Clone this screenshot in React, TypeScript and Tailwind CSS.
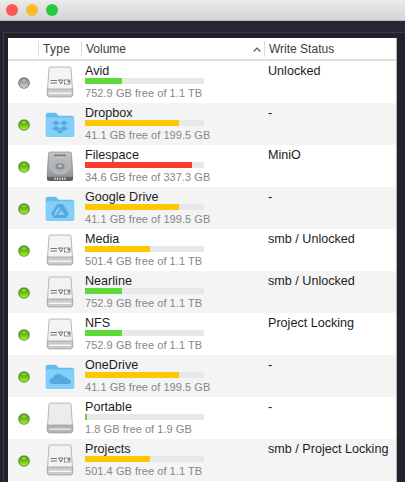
import React from "react";

type Kind = "drive" | "hd" | "portable" | "dropbox" | "gdrive" | "onedrive";

type Vol = {
  name: string;
  kind: Kind;
  pct: number;
  color: string;
  size: string;
  status: string;
  online?: boolean;
};

const volumes: Vol[] = [
  { name: "Avid", kind: "drive", pct: 31, color: "#5fd83a", size: "752.9 GB free of 1.1 TB", status: "Unlocked", online: false },
  { name: "Dropbox", kind: "dropbox", pct: 79, color: "#fdc800", size: "41.1 GB free of 199.5 GB", status: "-" },
  { name: "Filespace", kind: "hd", pct: 90, color: "#fb3a30", size: "34.6 GB free of 337.3 GB", status: "MiniO" },
  { name: "Google Drive", kind: "gdrive", pct: 79, color: "#fdc800", size: "41.1 GB free of 199.5 GB", status: "-" },
  { name: "Media", kind: "drive", pct: 55, color: "#fdc800", size: "501.4 GB free of 1.1 TB", status: "smb / Unlocked" },
  { name: "Nearline", kind: "drive", pct: 31, color: "#5fd83a", size: "752.9 GB free of 1.1 TB", status: "smb / Unlocked" },
  { name: "NFS", kind: "drive", pct: 31, color: "#5fd83a", size: "752.9 GB free of 1.1 TB", status: "Project Locking" },
  { name: "OneDrive", kind: "onedrive", pct: 79, color: "#fdc800", size: "41.1 GB free of 199.5 GB", status: "-" },
  { name: "Portable", kind: "portable", pct: 1.5, color: "#5fd83a", size: "1.8 GB free of 1.9 GB", status: "-" },
  { name: "Projects", kind: "drive", pct: 55, color: "#fdc800", size: "501.4 GB free of 1.1 TB", status: "smb / Project Locking" },
];

function StatusDot({ online = true }: { online?: boolean }) {
  const id = online ? "dot-on" : "dot-off";
  return (
    <svg width="12" height="12" viewBox="0 0 12 12">
      <defs>
        <linearGradient id={id} x1="0" y1="0" x2="0" y2="1">
          <stop offset="0%" stopColor={online ? "#4c9a08" : "#858585"} />
          <stop offset="55%" stopColor={online ? "#6fc80c" : "#a8a8a8"} />
          <stop offset="100%" stopColor={online ? "#aef032" : "#d6d6d6"} />
        </linearGradient>
      </defs>
      <circle cx="6" cy="6" r="5.8" fill={online ? "#5f8a3a" : "#747474"} />
      <circle cx="6" cy="6" r="4.8" fill={`url(#${id})`} />
      <ellipse cx="6" cy="3.2" rx="2.2" ry="1" fill="#fff" opacity="0.45" />
    </svg>
  );
}

function DriveIcon({ kind }: { kind: Kind }) {
  if (kind === "hd") {
    return (
      <svg width="28" height="31" viewBox="0 0 28 31">
        <defs>
          <linearGradient id="hd-body" x1="0" y1="0" x2="0" y2="1">
            <stop offset="0%" stopColor="#c4c8ca" />
            <stop offset="100%" stopColor="#94979a" />
          </linearGradient>
        </defs>
        <path d="M2.5 2.5 Q2.5 1 4 1 H24 Q25.5 1 25.5 2.5 L27 26 H1 Z" fill="url(#hd-body)" stroke="#77797b" strokeWidth="0.6" />
        <rect x="8" y="3.5" width="12" height="1.6" fill="#7d8082" />
        <ellipse cx="14" cy="15" rx="10" ry="8" fill="#b2b5b7" stroke="#d2d4d5" strokeWidth="0.5" />
        <ellipse cx="14" cy="15.5" rx="4.5" ry="3.2" fill="#8b8e90" />
        <ellipse cx="14" cy="15" rx="2" ry="1.3" fill="#c6c8c9" />
        <path d="M1 26 H27 V28 Q27 30 25 30 H3 Q1 30 1 28 Z" fill="#5f6164" />
        <path d="M9 26.5 V29 M11.5 26.5 V29 M14 26.5 V29 M16.5 26.5 V29 M19 26.5 V29" stroke="#e6e6e6" strokeWidth="1.1" />
      </svg>
    );
  }
  if (kind === "portable") {
    return (
      <svg width="28" height="32" viewBox="0 0 28 32">
        <path d="M3 2 Q3 1 4.5 1 H23.5 Q25 1 25 2 L26.5 24 H1.5 Z" fill="#ececec" stroke="#a9a9a9" strokeWidth="0.8" />
        <path d="M1.5 23 H26.5 L27 27 Q27 31 24.5 31 H3.5 Q1 31 1 27 Z" fill="#b4b4b4" stroke="#8f8f8f" strokeWidth="0.6" />
        <rect x="3" y="26.5" width="22" height="1.5" fill="#e6e6e6" />
      </svg>
    );
  }
  if (kind === "drive") {
    return (
      <svg width="28" height="32" viewBox="0 0 28 32">
        <path d="M3 2 Q3 1 4.5 1 H23.5 Q25 1 25 2 L26.5 24 H1.5 Z" fill="#f3f3f3" stroke="#a8a8a8" strokeWidth="0.8" />
        <path d="M1.5 23 H26.5 L27 27 Q27 31 24.5 31 H3.5 Q1 31 1 27 Z" fill="#cacaca" stroke="#8a8a8a" strokeWidth="0.6" />
        <rect x="3" y="26.5" width="22" height="1.5" fill="#f4f4f4" />
        <path d="M4.5 14.5 H11 M4.5 17 H11" stroke="#66686b" strokeWidth="0.9" />
        <path d="M12.5 14 L14.8 18 L17 14 Z" fill="none" stroke="#66686b" strokeWidth="0.9" />
        <rect x="18.5" y="14" width="5.5" height="4" fill="#fff" stroke="#66686b" strokeWidth="0.7" />
        <rect x="21.5" y="14.5" width="2.5" height="2" fill="#3c9a48" />
      </svg>
    );
  }
  return (
    <svg width="30" height="25" viewBox="0 0 30 25">
      <path d="M1 3 Q1 1 3 1 H10 Q11.5 1 12.5 2.5 L13.5 4 H27 Q29 4 29 6 V23 Q29 24.5 27.5 24.5 H2.5 Q1 24.5 1 23 Z" fill="#62bbee" stroke="#6bbdee" strokeWidth="0.5" />
      <path d="M1 6 Q1 5.2 2 5.2 H28 Q29 5.2 29 6 V23 Q29 24.5 27.5 24.5 H2.5 Q1 24.5 1 23 Z" fill="#82d0f7" />
      {kind === "dropbox" && (
        <path d="M11 8.5 L15 11 L11 13.5 L7 11 Z M19 8.5 L23 11 L19 13.5 L15 11 Z M11 14 L15 16.5 L19 14 L23 16.5 L19 19 L15 17 L11 19 L7 16.5 Z M11.5 19.5 L15 17.8 L18.5 19.5 L15 21.5 Z" fill="#56a8dc" />
      )}
      {kind === "gdrive" && (
        <path d="M12 8 H18 L24 18 L21 22 H9 L6 18 Z M13.5 10.5 L9 18 L10.5 20 L15 12.8 Z M16 14 L13 19 H20 Z" fill="#56a8dc" fillRule="evenodd" />
      )}
      {kind === "onedrive" && (
        <path d="M8 20 Q4 20 4.5 16.5 Q5 14 8 14 Q9 10 13.5 10 Q17 10 18.5 13 Q21.5 12 23 15 Q26 15.5 26 18 Q26 20 23.5 20 Z" fill="#56a8dc" />
      )}
    </svg>
  );
}

function Row({ vol, shaded }: { vol: Vol; shaded: boolean }) {
  return (
    <div className={`flex h-[42px] shrink-0 ${shaded ? "bg-[#f4f4f4]" : "bg-white"}`}>
      <div className="flex w-[30px] shrink-0 items-center justify-center pl-[1px] pt-[1px]">
        <StatusDot online={vol.online !== false} />
      </div>
      <div className="flex w-[43px] shrink-0 items-center justify-center pl-[1px]">
        <DriveIcon kind={vol.kind} />
      </div>
      <div className="w-[183px] shrink-0 pl-[4px]">
        <div className="h-[17px] pt-[2px] text-[12.6px] leading-[16px] text-[#1c1c22]">{vol.name}</div>
        <div className="h-[6px] w-[119px] bg-[#e8e8e8]">
          <div className="h-full" style={{ width: `${vol.pct}%`, backgroundColor: vol.color }} />
        </div>
        <div className="mt-[2px] whitespace-nowrap text-[11px] leading-[15px] tracking-[0.05px] text-[#85858b]">{vol.size}</div>
      </div>
      <div className="whitespace-nowrap pl-[4px] pt-[2px] text-[12.6px] leading-[16px] text-[#1c1c22]">{vol.status}</div>
    </div>
  );
}

function HeaderCell({ className, children }: { className: string; children?: React.ReactNode }) {
  return (
    <div className={`flex h-[16px] items-center border-l border-[#dcdcdc] pl-[4px] ${className}`}>{children}</div>
  );
}

export default function App() {
  return (
    <div className="flex h-[482px] w-[405px] flex-col overflow-hidden bg-[#21222c] font-['Liberation_Sans',sans-serif]">
      {/* title bar */}
      <div className="flex h-[21px] shrink-0 items-center gap-[8px] border-b border-[#b5b5b5] bg-gradient-to-b from-[#ebebeb] to-[#d4d4d4] pb-[1px] pl-[6px]">
        <div className="h-[12px] w-[12px] rounded-full bg-[#fc5753]" />
        <div className="h-[12px] w-[12px] rounded-full bg-[#fdbc2e]" />
        <div className="h-[12px] w-[12px] rounded-full bg-[#27c83f]" />
      </div>
      <div className="h-[11px] shrink-0 bg-[#262733]" />

      {/* inset frame round the table */}
      <div className="ml-[3px] flex min-h-0 flex-1 flex-col border-l border-t border-[#3b3c47] pl-[4px] pt-[5px]">
        <div className="flex w-[389px] min-h-0 flex-1 flex-col overflow-hidden border-r border-[#b4b4b6] bg-white">
          <div className="flex h-[23px] shrink-0 items-center border-b-2 border-[#dfdfdf] pt-[1px] text-[12px] text-[#3c3c44]">
            <div className="w-[30px] shrink-0" />
            <HeaderCell className="w-[43px] shrink-0 tracking-[0.3px]">Type</HeaderCell>
            <HeaderCell className="w-[183px] shrink-0 justify-between pr-[3px]">
              <span>Volume</span>
              <svg width="8" height="5" viewBox="0 0 8 5" fill="none" stroke="#55555c" strokeWidth="1.2">
                <path d="M0.7 4.5 L4 1 L7.3 4.5" />
              </svg>
            </HeaderCell>
            <HeaderCell className="flex-1">Write Status</HeaderCell>
          </div>
          {volumes.map((v, i) => (
            <Row key={v.name} vol={v} shaded={i % 2 === 1} />
          ))}
        </div>
      </div>
    </div>
  );
}
